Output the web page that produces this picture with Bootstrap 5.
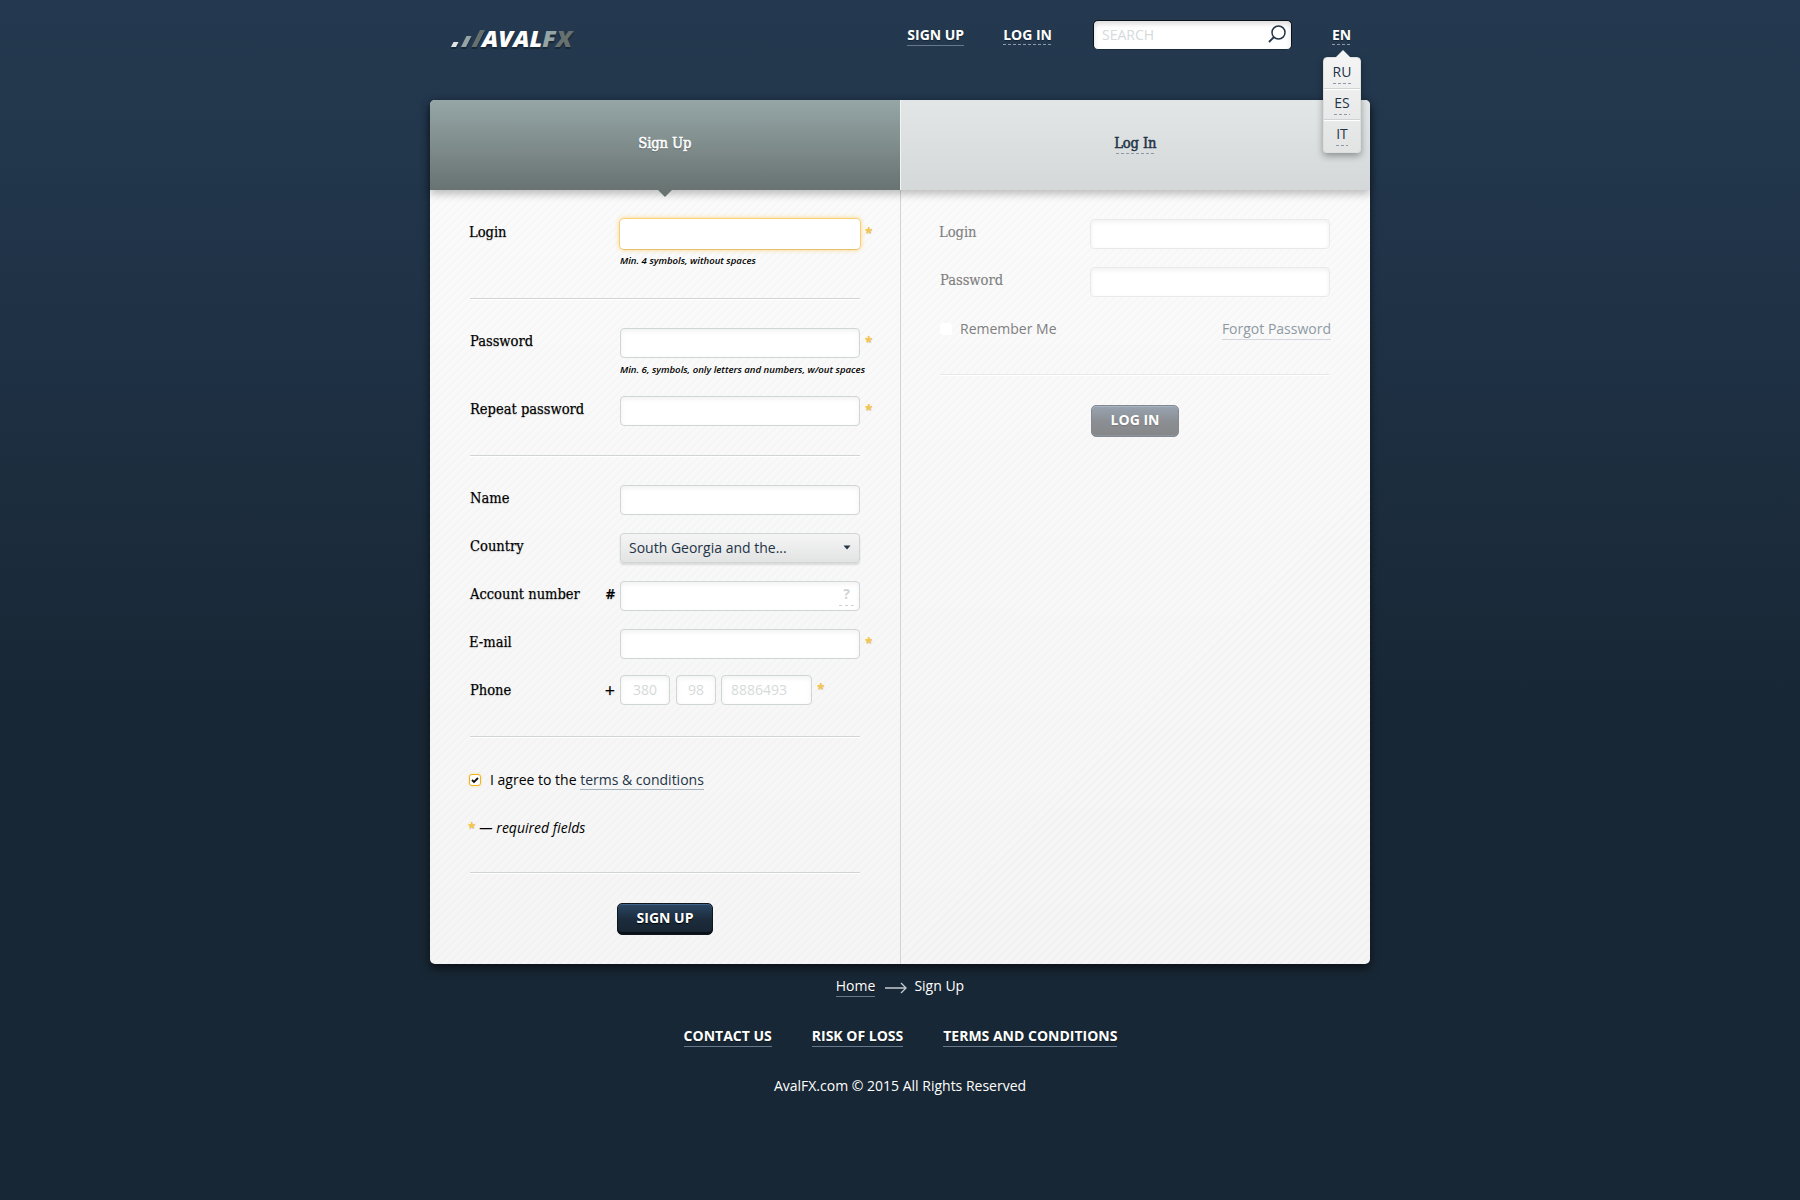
<!DOCTYPE html>
<html lang="en">
<head>
<meta charset="utf-8">
<title>AvalFX – Sign Up</title>
<link href="https://cdn.jsdelivr.net/npm/bootstrap@5.3.0/dist/css/bootstrap.min.css" rel="stylesheet">
<style>
body{font-family:"Open Sans","Noto Sans",sans-serif;font-size:14px;line-height:20px;color:#000;background:#182735 linear-gradient(#24394f 0,#22364c 150px,#182735 700px) no-repeat}
.wrap{width:940px;margin:0 auto}
a{text-decoration:none;color:inherit}
.topbar{height:100px;padding:20px 19px 0 21px;color:#fff}
.logo{height:36px}
.logo svg{overflow:visible}
.logo text{font:italic 800 23.5px "Open Sans",sans-serif;text-shadow:0 2px 1px rgba(0,0,0,.3)}
.lnk{display:block;font-weight:700;line-height:20px;text-shadow:0 1px 1px rgba(0,0,0,.35);white-space:nowrap}
.nav-a{margin:5px 39px 0 0}
.nav-b{margin:5px 41px 0 0}
.solid{border-bottom:1px solid #66788a}
.dash-soft{background:repeating-linear-gradient(90deg,#8d99a6 0 3px,transparent 3px 5px) left bottom/100% 1px no-repeat}
.searchbox{width:199px;height:30px;border:1px solid #0b1118;border-bottom-color:#1c2b3b;border-radius:5px;background:#fff;box-shadow:inset 0 3px 5px rgba(0,0,0,.14);padding:0 5px 0 8px}
.searchbox input{border:0;background:none;outline:0;width:150px;padding:0;font-size:14px}
.searchbox svg{margin-bottom:2px}
input::placeholder{color:#d5dada!important;opacity:1!important}
.lang{position:relative;width:19px;margin:5px 0 0 40px}
.langmenu{position:absolute;left:-9px;top:32px;width:38px;height:96px;border-radius:4px;background:linear-gradient(#f4f4f4,#e2e3e3);border:1px solid #dcdfdf;box-shadow:0 3px 7px rgba(0,0,0,.35);color:#233447;z-index:5}
.langmenu svg{position:absolute;left:11px;top:-8px}
.langmenu a{display:flex;justify-content:center;height:31px;padding-top:4px}
.langmenu a:first-of-type{height:30px}
.langmenu a+a{border-top:1px solid #cfd3d3;box-shadow:inset 0 1px 0 #fff}
.langmenu span{line-height:20px;height:22px}
.panel{height:864px;border-radius:5px;box-shadow:0 4px 10px rgba(0,0,0,.6);background:repeating-linear-gradient(135deg,rgba(0,0,0,.014) 0 1.6px,transparent 1.6px 5.66px),linear-gradient(#fbfbfb,#f5f5f5)}
.panel-cols{height:774px}
.slab{font-family:"Roboto Slab","DejaVu Serif Condensed","DejaVu Serif",serif;font-stretch:condensed}
.tabs{height:90px;position:relative;z-index:1;box-shadow:0 4px 8px rgba(0,0,0,.25);border-radius:5px 5px 0 0}
.tabs>div{flex:1 1 0;display:flex;justify-content:center;padding-top:32px;font-size:14.6px;line-height:22px;-webkit-text-stroke:.5px currentColor;letter-spacing:-.1px}
.t-on{background:linear-gradient(#96a6a6,#687372);border-radius:5px 0 0 0;color:#fff;text-shadow:0 1px 1px rgba(0,0,0,.4);position:relative}
.t-on svg{position:absolute;left:228px;top:90px}
.t-off{background:linear-gradient(#e2e6e6,#d4d8d9);border-left:1px solid #f2f4f4;border-radius:0 5px 0 0;color:#233447}
.t-off a{height:22px;background-size:calc(100% - 4px) 1px;background-position:center bottom}
.colf{width:470px;padding:29px 40px 0}
.colf+.colf{border-left:1px solid #cfd5d5;padding-left:39px}
.frow{display:flex;align-items:center;height:30px}
.flabel{width:150px;flex:none;font-size:14.6px;display:flex;align-items:center;justify-content:space-between;padding-right:5px;text-shadow:0 1px 1px rgba(0,0,0,.2);-webkit-text-stroke:.15px currentColor;letter-spacing:-.03px;white-space:nowrap;margin-top:-3.5px}
.flabel.low{margin-top:-1px}
.flabel.edge{text-indent:-1px}
.presign{font:600 14.5px/20px "Open Sans",sans-serif}
.plus{font:400 18px/20px "Open Sans",sans-serif}
.fi{width:240px;height:30px;flex:none;border:1px solid #d0d5d5;border-radius:4px;background:#fff;box-shadow:inset 0 2px 5px rgba(0,0,0,.06);padding:0 8px 1px;font-size:14px;outline:0}
.fi.hot{width:242px;height:32px;margin:0 -1px;border-color:#fad27a #f6cf7d #e6bf70;box-shadow:0 0 4px rgba(255,205,90,.8);border-radius:5px}
.fi.cc{width:50px}.fi.ac{width:40px;margin:0 5px 0 6px}.fi.ph{width:91px;padding-left:9px}
.ast{color:#f6c343;font-weight:700;margin:-2px 0 0 5px;text-shadow:0 1px 0 rgba(0,0,0,.15)}
.hint{height:24px;line-height:23px;padding-left:150px;font-style:italic;font-size:9.6px;font-weight:600;white-space:nowrap}
.rule{height:1px;background:#d0d4d4;box-shadow:0 1px 0 #fff}
.g14{margin-top:14px}.g16{margin-top:16px}.g18{margin-top:18px}.g25{margin-top:25px}.g29{margin-top:29px}.g31{margin-top:31px}.g32{margin-top:32px}.g33{margin-top:33px}
.sel{display:flex;justify-content:space-between;align-items:center;background:linear-gradient(#f5f5f5,#e2e3e3);box-shadow:0 2px 2px rgba(0,0,0,.12);color:#233447}
.helpbox{padding-right:5px}
.help{color:#cfd3d3;font-weight:700;width:15px;text-align:center;height:21px;line-height:18px;background:repeating-linear-gradient(90deg,#cfd3d3 0 3px,transparent 3px 6px) left bottom/100% 1px no-repeat}
.agree{height:24px;margin:31px 0 0 -1px}
.remember{height:24px;margin:20px -1px 0 0}
.req{height:24px;margin:24px 0 0 -2px;line-height:24px}
.chk{width:12px;height:12px;border-radius:3px;display:flex;margin-right:9px}
.off .chk{margin-right:8px}
.chk.on{border:1px solid #f0b323;background:#fff;box-shadow:0 0 2px rgba(255,205,90,.8)}
.tlink{color:#233447;border-bottom:1px solid #a9b3bd}
.bt{display:block;width:96px;height:32px;margin:30px auto 0;border-radius:5px;border:1px solid #0e161e;color:#fff;font-weight:700;font-size:14px;padding:0 0 2px;line-height:26px;text-shadow:0 1px 1px #000;background:linear-gradient(#2b4764,#1c2c3d 50%,#182431);box-shadow:inset 0 1px 0 #41648a,inset 0 -2px 0 #0a1017}
.off .flabel,.off .remember{color:#7f7f7f;text-shadow:none}
.off .fi{border-color:#e8eaea}
.off .rule{background:#e7e9e9}
.off .tlink{color:#8e99a3;border-color:#d4d8dc}
.off .bt{width:88px;border-color:#85898d;background:linear-gradient(#98a4b0,#8b8f94 50%,#868787);box-shadow:inset 0 1px 0 #a3b4c6,inset 0 -1px 0 #8b959f;text-shadow:0 1px 1px #777}
.foot{color:#fff;height:236px}
.foot .lnk{height:21px}
.crumbs{padding-top:12px}
.crumbs svg{margin:6px 7px 0 10px}
.flinks{padding:29px 0 0 1px;gap:40px}
.copy{padding-top:29px;text-align:center}
</style>
</head>
<body>
<div class="wrap">
  <header class="topbar d-flex">
    <a class="logo me-auto" href="#"><svg width="124" height="36" viewBox="0 0 124 36"><path d="M0 29l2.500-5h5L5 29zM10 29l5.500-11h5L15 29zM20.500 29l8.500-17h5l-8.500 17z" opacity=".3"/><path d="M0 27l2.500-5h5L5 27z" fill="#dfe4e6"/><path d="M10 27l5.500-11h5L15 27z" fill="#95a5a5"/><path d="M20.500 27l8.500-17h5L25.500 27z" fill="#66716f"/><text x="31" y="27" textLength="90" lengthAdjust="spacingAndGlyphs" fill="#fff">AVAL<tspan fill="#95a5a5">F</tspan><tspan fill="#66716f">X</tspan></text></svg></a>
    <a class="lnk nav-a" href="#"><span class="d-block solid">SIGN UP</span></a>
    <a class="lnk nav-b" href="#"><span class="d-block dash-soft">LOG IN</span></a>
    <div class="searchbox d-flex align-items-center justify-content-between"><input placeholder="SEARCH"><svg width="18" height="18" viewBox="0 0 18 18" fill="none" stroke="#233447" stroke-width="1.500"><circle cx="10.500" cy="7.500" r="6.500"/><path d="M6 12L1 17" stroke-width="1.900"/></svg></div>
    <div class="lang"><a class="lnk" href="#"><span class="d-block dash-soft">EN</span></a>
      <div class="langmenu"><svg width="16" height="8"><path d="M0 8L8 0l8 8z" fill="#f4f4f4"/></svg><a href="#"><span class="dash-soft">RU</span></a><a href="#"><span class="dash-soft">ES</span></a><a href="#"><span class="dash-soft">IT</span></a></div>
    </div>
  </header>
  <main class="panel">
    <div class="tabs d-flex slab"><div class="t-on">Sign Up<svg width="14" height="7"><path d="M0 0h14L7 7z" fill="#687372"/></svg></div><div class="t-off"><a href="#" class="dash-soft">Log In</a></div></div>
    <div class="d-flex panel-cols">
      <form class="colf">
        <div class="frow"><div class="flabel slab edge">Login</div><input class="fi hot"><span class="ast">*</span></div>
        <div class="hint">Min. 4 symbols, without spaces</div>
        <div class="rule g25"></div>
        <div class="frow g29"><div class="flabel slab">Password</div><input class="fi"><span class="ast">*</span></div>
        <div class="hint">Min. 6, symbols, only letters and numbers, w/out spaces</div>
        <div class="frow g14"><div class="flabel slab">Repeat password</div><input class="fi"><span class="ast">*</span></div>
        <div class="rule g29"></div>
        <div class="frow g29"><div class="flabel slab">Name</div><input class="fi"></div>
        <div class="frow g18"><div class="flabel slab">Country</div><div class="fi sel">South Georgia and the...<svg width="8" height="5"><path d="M.5 .5h7L4 4.500z" fill="#233447"/></svg></div></div>
        <div class="frow g18"><div class="flabel slab">Account number<span class="presign">#</span></div><div class="fi helpbox d-flex justify-content-end align-items-center"><span class="help">?</span></div></div>
        <div class="frow g18"><div class="flabel slab edge">E-mail</div><input class="fi"><span class="ast">*</span></div>
        <div class="frow g16"><div class="flabel slab low">Phone<span class="plus">+</span></div><input class="fi cc text-center" placeholder="380"><input class="fi ac text-center" placeholder="98"><input class="fi ph" placeholder="8886493"><span class="ast">*</span></div>
        <div class="rule g31"></div>
        <div class="d-flex align-items-center agree"><span class="chk on"><svg width="10" height="10" fill="none" stroke="#111" stroke-width="1.800"><path d="M2 5l2 2 4-4"/></svg></span><span>I agree to the <a class="tlink" href="#">terms &amp; conditions</a></span></div>
        <div class="req"><span class="ast ms-0">*</span> <i>— required fields</i></div>
        <div class="rule g32"></div>
        <button type="button" class="bt">SIGN UP</button>
      </form>
      <form class="colf off">
        <div class="frow"><div class="flabel slab edge">Login</div><input class="fi"></div>
        <div class="frow g18"><div class="flabel slab">Password</div><input class="fi"></div>
        <div class="d-flex align-items-center remember"><span class="chk bg-white"></span><span>Remember Me</span><a class="ms-auto tlink" href="#">Forgot Password</a></div>
        <div class="rule g33"></div>
        <button type="button" class="bt">LOG IN</button>
      </form>
    </div>
  </main>
  <footer class="foot">
    <div class="d-flex justify-content-center crumbs"><a class="lnk solid fw-normal" href="#">Home</a><svg width="22" height="12" fill="none" stroke="#c5ccd3"><path d="M0 6h21" stroke-width="1.500"/><path d="M16 1l5 5-5 5" stroke-width="1.300"/></svg><span>Sign Up</span></div>
    <div class="d-flex justify-content-center flinks"><a class="lnk solid" href="#">CONTACT US</a><a class="lnk solid" href="#">RISK OF LOSS</a><a class="lnk solid" href="#">TERMS AND CONDITIONS</a></div>
    <div class="copy">AvalFX.com © 2015 All Rights Reserved</div>
  </footer>
</div>
<script src="https://cdn.jsdelivr.net/npm/bootstrap@5.3.0/dist/js/bootstrap.bundle.min.js"></script>
</body>
</html>
